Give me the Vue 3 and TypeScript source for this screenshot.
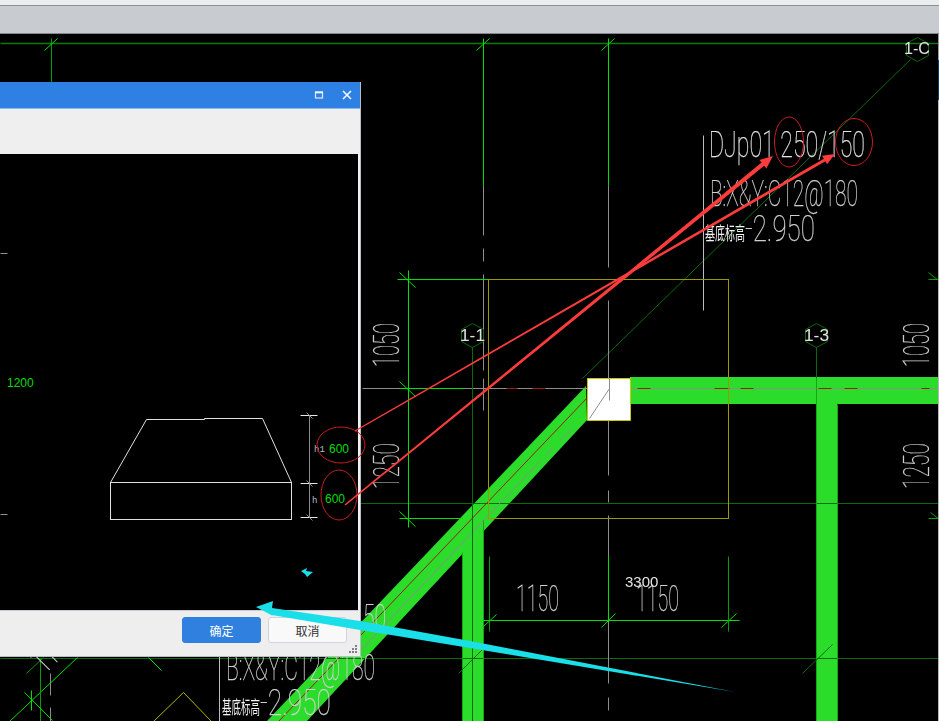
<template>
  <div class="screen">
    <div class="top-strip"></div>
    <div class="toolbar"></div>
    <main class="canvas">
      <svg class="drawing" width="939" height="687" viewBox="0 34 939 687">
        <polygon class="beam" points="630,377 939,377 939,404 837,404 837,721 816,721 816,404 630,404" />
        <polygon class="beam" points="586,386 587,420 307,721 267,721" />
        <rect class="beam" x="462" y="520" width="21" height="201" />
        <g transform="translate(0.5 0.5)">
          <line
            v-for="(l, i) in cadLines"
            :key="i"
            :x1="l[0]"
            :y1="l[1]"
            :x2="l[2]"
            :y2="l[3]"
            :class="l[4]"
          />
          <rect class="olive" x="488" y="279" width="240" height="239" />
          <polygon class="pillar" points="587,378 630,378 630,420 587,420" />
          <line class="gray" x1="589" y1="418" x2="609" y2="388" />
          <line class="gray" x1="609" y1="378" x2="609" y2="400" />
          <polygon class="hex" points="917,37 928,43 928,55 917,61 906,55 906,43" />
          <polygon class="hex" points="472,323 483,329 483,341 472,347 461,341 461,329" />
          <polygon class="hex" points="816,323 827,329 827,341 816,347 805,341 805,329" />
          <polyline class="yellow" points="153,721 183,692 211,721" />
        </g>

        <text class="axis" x="904" y="54" textLength="26" lengthAdjust="spacingAndGlyphs">1-C</text>
        <text class="axis" x="460" y="341" textLength="25" lengthAdjust="spacingAndGlyphs">1-1</text>
        <text class="axis" x="804" y="341" textLength="25" lengthAdjust="spacingAndGlyphs">1-3</text>

        <text class="cad main" x="709" y="157" textLength="156" lengthAdjust="spacingAndGlyphs">DJp01 250/150</text>
        <text class="cad" x="710" y="206" textLength="148" lengthAdjust="spacingAndGlyphs">B:X&amp;Y:C12@180</text>
        <text class="cad-cn" x="705" y="240" textLength="40" lengthAdjust="spacingAndGlyphs">基底标高</text>
        <text class="cad" x="745" y="241" textLength="70" lengthAdjust="spacingAndGlyphs">-2.950</text>

        <text class="cad" x="226" y="680" textLength="149" lengthAdjust="spacingAndGlyphs">B:X&amp;Y:C12@180</text>
        <text class="cad-cn" x="222" y="714" textLength="38" lengthAdjust="spacingAndGlyphs">基底标高</text>
        <text class="cad" x="260" y="715" textLength="71" lengthAdjust="spacingAndGlyphs">-2.950</text>
        <text class="cad" x="363" y="630" textLength="23" lengthAdjust="spacingAndGlyphs">50</text>
        <text class="cad" x="516" y="611" textLength="43" lengthAdjust="spacingAndGlyphs">1150</text>
        <text class="cad" x="636" y="611" textLength="43" lengthAdjust="spacingAndGlyphs">1150</text>
        <text class="plain" x="625" y="587">3300</text>

        <text class="cad" transform="translate(399 367) rotate(-90)" textLength="44" lengthAdjust="spacingAndGlyphs">1050</text>
        <text class="cad" transform="translate(399 489) rotate(-90)" textLength="46" lengthAdjust="spacingAndGlyphs">1250</text>
        <text class="cad" transform="translate(929 367) rotate(-90)" textLength="44" lengthAdjust="spacingAndGlyphs">1050</text>
        <text class="cad" transform="translate(929 489) rotate(-90)" textLength="46" lengthAdjust="spacingAndGlyphs">1250</text>
        <text class="cad tilted" transform="translate(45 674) rotate(-45)" textLength="44" lengthAdjust="spacingAndGlyphs">1150</text>
      </svg>
      <div class="edge"></div>

      <section class="dialog">
        <header class="dialog-title">
          <svg class="win-icon" width="10" height="10" viewBox="0 0 10 10">
            <rect x="1.5" y="2" width="7" height="6" fill="none" stroke="#dfeafa" stroke-width="1.2" />
            <line x1="1" y1="2.5" x2="9" y2="2.5" stroke="#fff" stroke-width="1.6" />
          </svg>
          <svg class="win-icon" width="10" height="10" viewBox="0 0 10 10">
            <path d="M1 1 L9 9 M9 1 L1 9" fill="none" stroke="#fff" stroke-width="1.5" />
          </svg>
        </header>
        <div class="dialog-tools"></div>
        <div class="dialog-view">
          <svg class="preview" width="358" height="456" viewBox="0 154 358 456">
            <g transform="translate(0.5 0.5)">
              <line v-for="(l, i) in previewLines" :key="i" :x1="l[0]" :y1="l[1]" :x2="l[2]" :y2="l[3]" :class="l[4]" />
              <polyline class="shape" points="110,482 146,419 204,419 204,418 262,418 291,482" />
              <rect class="shape" x="110" y="482" width="181" height="37" />
            </g>
            <text class="dim-label" x="314" y="452">h1</text>
            <text class="dim-label" x="312" y="503">h</text>
            <text class="dim-value" x="7" y="387">1200</text>
            <text class="dim-value" x="329" y="453">600</text>
            <text class="dim-value" x="325" y="503">600</text>
            <polygon class="cyan" points="301,571 307,568 306,571 313,572 307,577 305,574" />
          </svg>
        </div>
        <footer class="dialog-foot">
          <button type="button" class="btn ok">确定</button>
          <button type="button" class="btn cancel">取消</button>
          <svg class="grip" width="9" height="9" viewBox="0 0 9 9">
            <rect x="6" y="0" width="2" height="2" />
            <rect x="3" y="3" width="2" height="2" />
            <rect x="6" y="3" width="2" height="2" />
            <rect x="0" y="6" width="2" height="2" />
            <rect x="3" y="6" width="2" height="2" />
            <rect x="6" y="6" width="2" height="2" />
          </svg>
        </footer>
      </section>

      <!-- markup drawn on the screenshot, sits above the dialog -->
      <svg class="markup" width="939" height="687" viewBox="0 34 939 687">
        <ellipse class="ring" cx="789" cy="142" rx="14.5" ry="25" />
        <ellipse class="ring" cx="854" cy="142" rx="18.5" ry="23.5" />
        <ellipse class="ring" cx="341" cy="445" rx="24" ry="18" />
        <ellipse class="ring" cx="339" cy="495" rx="18" ry="25" />
        <polygon class="red-arrow" points="354.7,430.5 823.9,158.7 822,155.7 835,154 827,164.3 825.4,161.3 355.3,431.5" />
        <polygon class="red-arrow" points="344.5,504.4 761.6,162.6 759.4,159.9 773,156 766.4,168.5 764.2,165.8 345.5,505.6" />
        <polygon
          class="cyan"
          points="256,607 273,601 272,608 360,621 470,641 735,692 470,648 360,630 272,615 273,616"
        />
      </svg>
    </main>
  </div>
</template>

<script setup lang="ts">
type Seg = [number, number, number, number, string];

const cadLines: Seg[] = [
  // main axes
  [0, 43, 939, 43, "dim"],
  [51, 38, 51, 82, "mid"],
  [483, 38, 483, 185, "bright"],
  [608, 38, 608, 185, "bright"],
  [44, 50, 57, 38, "bright"],
  [476, 50, 489, 38, "bright"],
  [601, 50, 614, 38, "bright"],
  [360, 503, 939, 503, "dark"],
  [0, 658, 939, 658, "dark"],
  [910, 59, 582, 378, "dark"],
  // center lines
  [483, 185, 483, 235, "gray"],
  [483, 248, 483, 261, "gray"],
  [483, 274, 483, 370, "gray"],
  [483, 378, 483, 410, "gray"],
  [608, 185, 608, 267, "gray"],
  [608, 300, 608, 475, "gray"],
  [608, 490, 608, 502, "gray"],
  [608, 515, 608, 683, "gray"],
  [608, 697, 608, 710, "gray"],
  [362, 388, 609, 388, "gray"],
  [622, 388, 939, 388, "gray"],
  [703, 135, 703, 310, "light"],
  [219, 656, 219, 721, "light"],
  [50, 673, 50, 695, "gray"],
  [50, 707, 50, 721, "gray"],
  // red centre dashes
  [506, 388, 517, 388, "red"],
  [532, 388, 545, 388, "red"],
  [637, 388, 650, 388, "red"],
  [714, 388, 729, 388, "red"],
  [740, 388, 753, 388, "red"],
  [818, 388, 831, 388, "red"],
  [844, 388, 857, 388, "red"],
  [921, 388, 929, 388, "red"],
  [586, 398, 278, 721, "red"],
  [572, 428, 560, 440, "gray"],
  [553, 447, 545, 455, "gray"],
  [540, 460, 360, 650, "gray"],
  // dimension lines on the left of the footing
  [408, 270, 408, 527, "bright"],
  [397, 279, 488, 279, "bright"],
  [399, 518, 462, 518, "bright"],
  [399, 388, 463, 388, "bright"],
  [399, 381, 415, 396, "bright"],
  [399, 511, 415, 526, "bright"],
  [399, 272, 415, 287, "bright"],
  [472, 347, 472, 721, "dark"],
  [816, 347, 816, 378, "dark"],
  [816, 378, 816, 721, "beam-edge"],
  [837, 404, 837, 721, "beam-edge"],
  [483, 520, 483, 721, "beam-edge"],
  [462, 552, 462, 721, "beam-edge"],
  // bottom dimension
  [482, 620, 739, 620, "bright"],
  [489, 556, 489, 631, "mid"],
  [608, 556, 608, 620, "bright"],
  [728, 556, 728, 631, "mid"],
  [483, 626, 496, 614, "bright"],
  [601, 627, 615, 613, "bright"],
  [721, 627, 736, 613, "bright"],
  // far right ticks
  [928, 279, 939, 279, "mid"],
  [928, 272, 938, 280, "mid"],
  [928, 518, 939, 518, "mid"],
  [930, 512, 939, 519, "mid"],
  // grid ticks low on the page
  [802, 673, 832, 644, "dark"],
  [458, 673, 483, 648, "dark"],
  // lower left corner
  [9, 721, 77, 657, "bright"],
  [40, 658, 40, 721, "mid"],
  [31, 690, 31, 710, "bright"],
  [24, 692, 52, 720, "bright"],
  [26, 673, 43, 657, "mid"],
  [148, 657, 161, 670, "bright"],
];

const previewLines: Seg[] = [
  [0, 253, 7, 253, "gray"],
  [0, 514, 7, 514, "gray"],
  [309, 415, 309, 517, "gray"],
  [300, 415, 317, 415, "white"],
  [300, 483, 317, 483, "white"],
  [300, 517, 317, 517, "white"],
  [306, 412, 312, 418, "gray"],
  [306, 480, 312, 486, "gray"],
  [306, 514, 312, 520, "gray"],
];
</script>

<style>
html,
body {
  margin: 0;
  background: #000;
}
</style>

<style scoped>
.screen {
  width: 939px;
  height: 721px;
  display: flex;
  flex-direction: column;
  overflow: hidden;
  font-family: "Liberation Sans", "Noto Sans CJK SC", sans-serif;
}

.top-strip {
  height: 5px;
  background: #e9eeee;
  border-bottom: 1px solid #8d9094;
}

.toolbar {
  height: 27px;
  background: #c8cbd0;
  border-bottom: 1px solid #85878c;
}

.canvas {
  flex: 1;
  position: relative;
  background: #000;
}

.drawing,
.markup {
  position: absolute;
  top: 0;
  left: 0;
  will-change: transform;
}

.markup {
  pointer-events: none;
}

.edge {
  position: absolute;
  top: 0;
  right: 0;
  bottom: 0;
  width: 1px;
  background: linear-gradient(#9a9a9a 26px, #0b3d6b 26px, #0b3d6b 66px, #b4b4b4 66px);
}

line,
polyline {
  fill: none;
}

.beam {
  fill: #2bdc2b;
}

.bright {
  stroke: #00e000;
}
.mid {
  stroke: #00a000;
}
.dim {
  stroke: #0a7a0a;
  stroke-width: 1.5;
}
.dark {
  stroke: #0b6a0b;
}
.beam-edge {
  stroke: #17a417;
}
.gray {
  stroke: #8e8e8e;
}
.light {
  stroke: #bcbcbc;
}
.white {
  stroke: #e6e6e6;
}
.red {
  stroke: #a01c10;
}

.olive {
  fill: none;
  stroke: #9a9a00;
}

.yellow {
  stroke: #b5b500;
}

.pillar {
  fill: #fff;
  stroke: #c8c800;
}

.hex {
  fill: none;
  stroke: #0b6a0b;
}

.axis {
  font-family: "Liberation Sans", sans-serif;
  font-size: 16px;
  fill: #e2e2e2;
}

.cad {
  font-family: Roboto, "Liberation Sans", sans-serif;
  font-weight: 100;
  font-size: 36px;
  fill: #d0d0d0;
  stroke: #d0d0d0;
  stroke-width: 0.25;
}

.cad.main {
  fill: #e4e4e4;
  stroke: #e4e4e4;
}

.cad.tilted {
  stroke-width: 0.7;
}

.cad-cn {
  font-family: "Noto Sans CJK SC", sans-serif;
  font-size: 18px;
  fill: #f2f2f2;
}

.plain {
  font-size: 15px;
  fill: #e4e4e4;
}

.dialog {
  position: absolute;
  top: 48px;
  left: 0;
  width: 360px;
  height: 574px;
  display: flex;
  flex-direction: column;
  background: #eee;
  border-right: 1px solid #b8bcc6;
  border-bottom: 1px solid #b8bcc6;
}

.dialog-title {
  height: 26px;
  flex: none;
  display: flex;
  align-items: center;
  justify-content: flex-end;
  gap: 18px;
  padding-right: 8px;
  background: #2e80e2;
  border-bottom: 1px solid #8db8ec;
}

.win-icon {
  display: block;
}

.dialog-tools {
  height: 45px;
  flex: none;
  background: #efefef;
}

.dialog-view {
  height: 456px;
  flex: none;
  background: #000;
  border-right: 2px solid #f2f2f2;
  border-bottom: 1px solid #c8ccd4;
}

.preview {
  display: block;
}

.shape {
  fill: none;
  stroke: #e0e0e0;
}

.dim-label {
  font-family: "Liberation Mono", monospace;
  font-size: 9px;
  fill: #b4bcc8;
}

.dim-value {
  font-size: 12px;
  fill: #00dc00;
}

.cyan {
  fill: #1bdfe8;
}

.dialog-foot {
  flex: 1;
  position: relative;
  display: flex;
  align-items: flex-start;
  justify-content: flex-end;
  gap: 7px;
  padding: 6px 13px 0 0;
  background: #eee;
}

.btn {
  width: 79px;
  height: 26px;
  padding: 0;
  border-radius: 3px;
  font-family: "Noto Sans CJK SC", sans-serif;
  font-size: 12px;
}

.ok {
  background: #3080e0;
  border: 1px solid #3080e0;
  color: #fff;
}

.cancel {
  background: #f9f9f9;
  border: 1px solid #cdd3df;
  color: #333;
}

.grip {
  position: absolute;
  right: 2px;
  bottom: 2px;
  fill: #7a8088;
}

.ring {
  fill: none;
  stroke: #c81e1e;
}

.red-arrow {
  fill: #ff3c3c;
}
</style>
